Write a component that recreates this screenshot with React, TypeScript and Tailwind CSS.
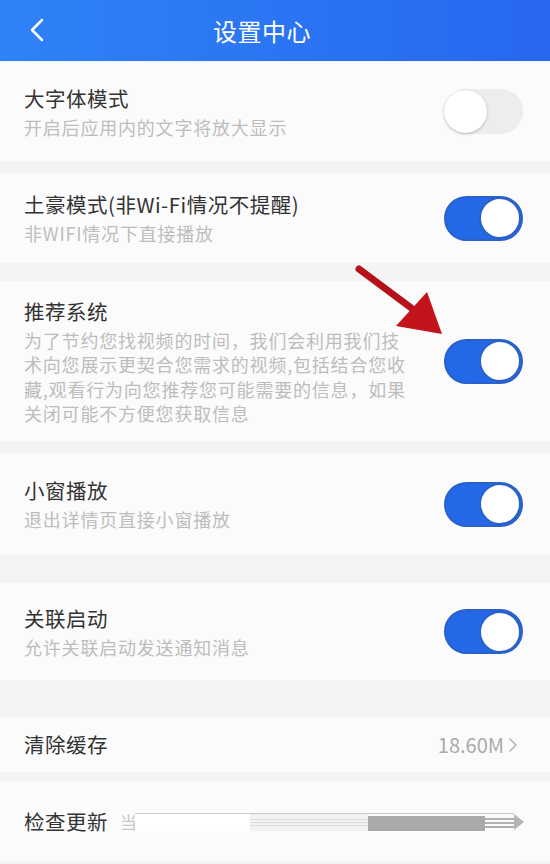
import { ChevronLeft, ChevronRight } from 'lucide-react';

const font = { fontFamily: '"Noto Sans CJK SC", "Noto Sans", sans-serif' };

function Toggle({ on }: { on: boolean }) {
  return on ? (
    <div className="w-[79px] h-[45px] rounded-full bg-[#2368e6] border-2 border-[#2b62c9] flex items-center justify-end shrink-0">
      <div className="w-[42px] h-[42px] rounded-full bg-white border-2 border-[#2b62c9]" />
    </div>
  ) : (
    <div className="w-[79px] h-[45px] rounded-full bg-[#ededed] flex items-center justify-start shrink-0">
      <div className="w-[43px] h-[43px] rounded-full bg-white shadow-[0_1px_3px_rgba(0,0,0,0.25)]" />
    </div>
  );
}

function SwitchRow({
  title,
  desc,
  on,
  height,
}: {
  title: string;
  desc: string;
  on: boolean;
  height: string;
}) {
  return (
    <div className={`bg-[#fbfbfb] flex items-center justify-between pl-[24px] pr-[27px] ${height}`}>
      <div className="w-[385px] flex flex-col gap-[3px]">
        <div className="text-[20.5px] leading-[28px] text-[#333] tracking-[0.5px]">{title}</div>
        <div className="text-[18px] leading-[24.5px] text-[#bdbdbd] tracking-[0.8px]">{desc}</div>
      </div>
      <Toggle on={on} />
    </div>
  );
}

export default function App() {
  return (
    <div className="relative w-[550px] h-[864px] overflow-hidden bg-[#f4f4f4]" style={font}>
      <div className="h-[61px] bg-gradient-to-r from-[#2f82f7] to-[#2767ef] flex items-center relative pr-[26px]">
        <ChevronLeft className="absolute left-[17px] top-[10px] text-white" size={40} strokeWidth={1.5} />
        <div className="flex-1 text-center text-white text-[24px] tracking-[0.5px]">设置中心</div>
      </div>

      <SwitchRow title="大字体模式" desc="开启后应用内的文字将放大显示" on={false} height="h-[99px] mt-[1px]" />
      <div className="h-[12px]" />
      <SwitchRow title="土豪模式(非Wi-Fi情况不提醒)" desc="非WIFI情况下直接播放" on={true} height="h-[90px]" />
      <div className="h-[18px]" />
      <SwitchRow
        title="推荐系统"
        desc="为了节约您找视频的时间，我们会利用我们技术向您展示更契合您需求的视频,包括结合您收藏,观看行为向您推荐您可能需要的信息，如果关闭可能不方便您获取信息"
        on={true}
        height="h-[160px]"
      />
      <div className="h-[12px]" />
      <SwitchRow title="小窗播放" desc="退出详情页直接小窗播放" on={true} height="h-[102px]" />
      <div className="h-[28px]" />
      <SwitchRow title="关联启动" desc="允许关联启动发送通知消息" on={true} height="h-[97px]" />
      <div className="h-[37px]" />

      <div className="h-[55px] bg-[#fbfbfb] flex items-center justify-between pl-[24px] pr-[25px]">
        <div className="text-[20.5px] text-[#333] tracking-[0.5px]">清除缓存</div>
        <div className="flex items-center text-[#aaaaaa] text-[20px]">
          <span>18.60M</span>
          <ChevronRight size={24} strokeWidth={1.3} className="-ml-[3px]" />
        </div>
      </div>
      <div className="h-[10px]" />
      <div className="h-[79px] bg-[#fbfbfb] flex items-center pl-[24px] pr-[26px]">
        <div className="text-[20.5px] text-[#333] tracking-[0.5px]">检查更新</div>
        <div className="ml-[12px] text-[17px] text-[#c8c8c8]">当</div>
        <div className="flex-1 flex items-center h-[20px] -ml-[2px]">
          <div className="flex-1 h-[18px] flex flex-col">
            <div className="h-[1px] bg-[#c9c9c9]" />
            <div className="flex-1 flex">
              <div className="w-[115px] bg-white" />
              <div className="w-[118px] flex flex-col justify-center gap-[2px] bg-[#f2f2f2]">
                <div className="h-[1px] bg-[#dddddd]" />
                <div className="h-[1px] bg-[#dddddd]" />
                <div className="h-[1px] bg-[#dddddd]" />
              </div>
              <div className="w-[117px] bg-[#a9a9a9] mt-[2px]" />
              <div className="flex-1 flex flex-col justify-center gap-[2px] mt-[2px]">
                <div className="h-[2px] bg-[#b0b0b0]" />
                <div className="h-[2px] bg-[#b0b0b0]" />
                <div className="h-[2px] bg-[#b0b0b0]" />
              </div>
            </div>
          </div>
          <div className="w-0 h-0 border-y-[8px] border-y-transparent border-l-[10px] border-l-[#b5b5b5]" />
        </div>
      </div>

      <svg className="absolute left-0 top-0 pointer-events-none" width="550" height="864">
        <line x1="359" y1="269" x2="418" y2="313" stroke="#b5121a" strokeWidth="7" strokeLinecap="round" />
        <polygon points="442,334 396,326 427,292" fill="#c4141b" />
      </svg>
    </div>
  );
}
